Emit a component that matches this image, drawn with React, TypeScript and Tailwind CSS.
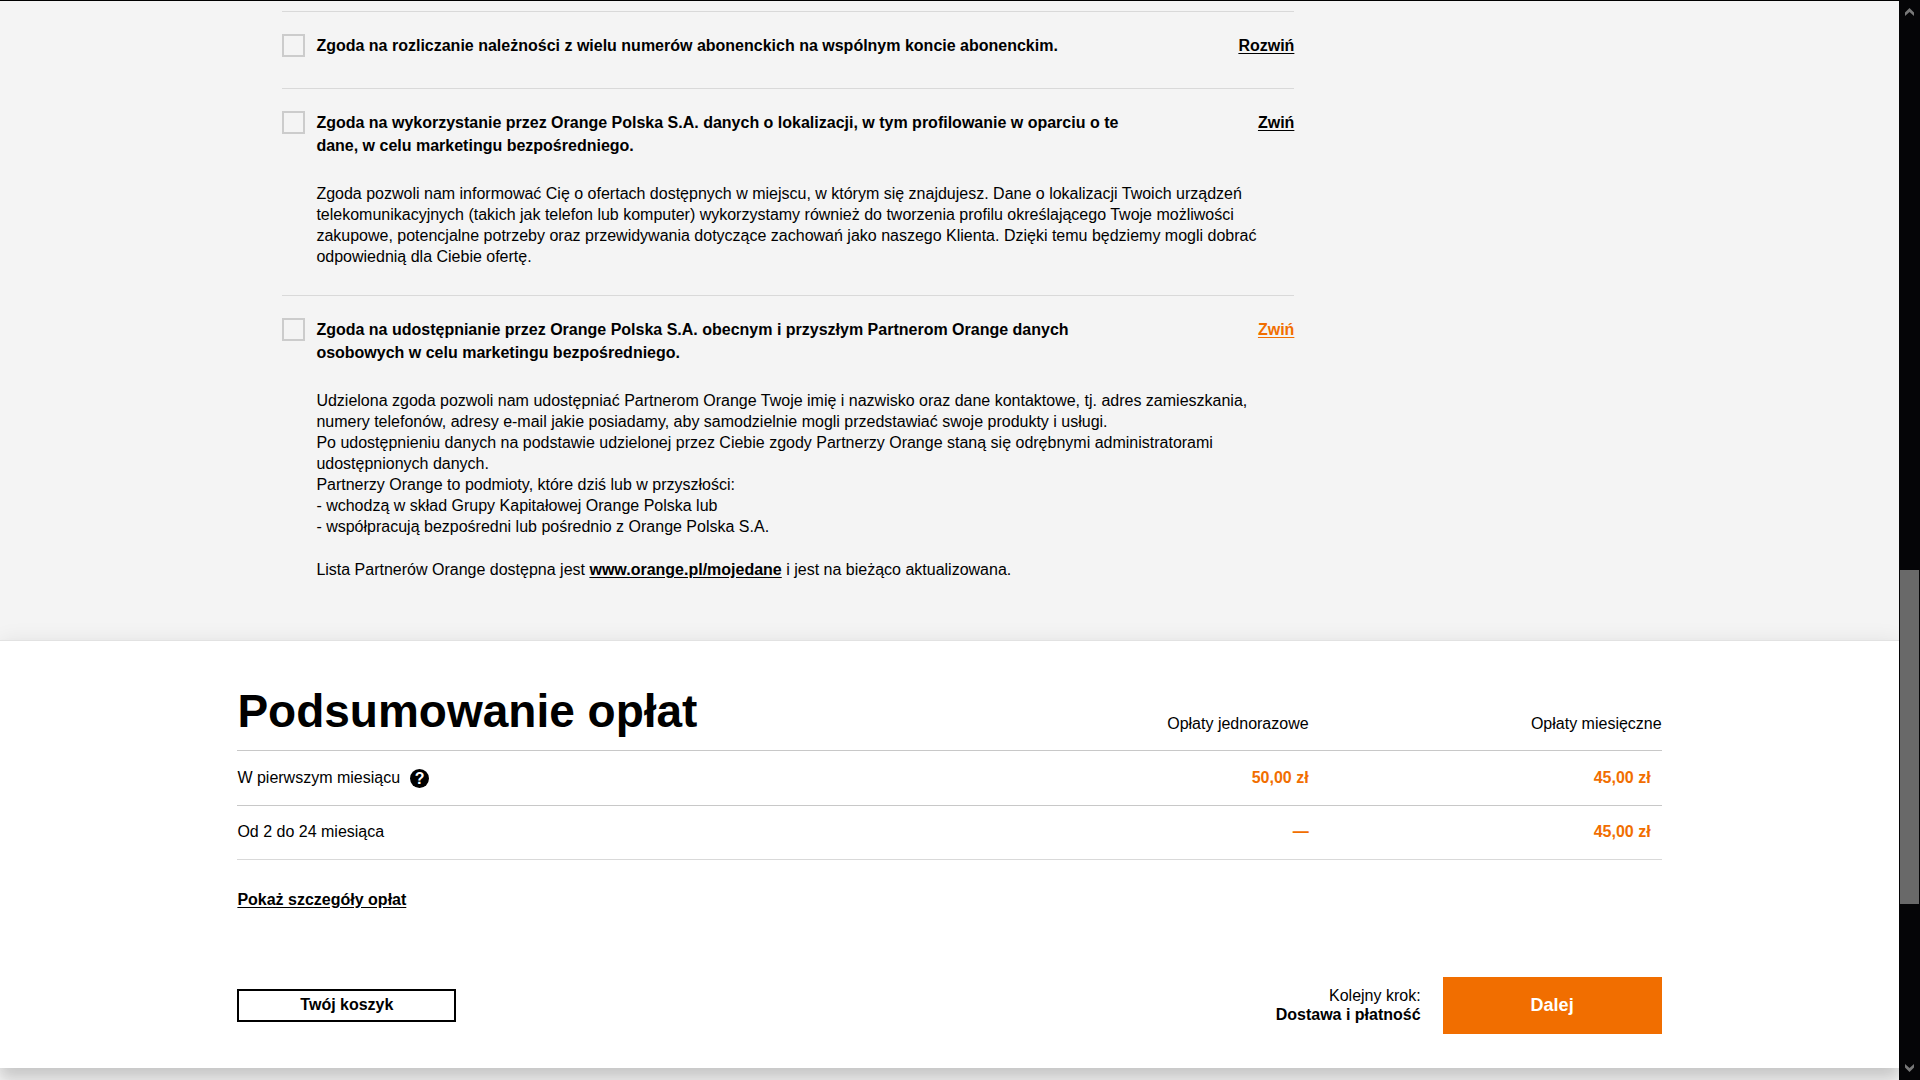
import { useState, type ReactNode } from 'react';

type ConsentProps = {
  id: string;
  title: string;
  defaultOpen?: boolean;
  toggleClassName?: string;
  children?: ReactNode;
};

function Consent({ id, title, defaultOpen = false, toggleClassName = 'text-black', children }: ConsentProps) {
  const [open, setOpen] = useState(defaultOpen);

  return (
    <section className="border-t border-[#d9d9d9] pt-[22px]">
      <div className="flex items-start">
        <input
          id={id}
          type="checkbox"
          className="size-[23px] shrink-0 appearance-none border-2 border-[#cccccc] checked:bg-[#f16e00]"
        />
        <label htmlFor={id} className="ml-[11px] max-w-[820px] font-bold leading-[23px]">
          {title}
        </label>
        <button
          type="button"
          aria-expanded={open}
          onClick={() => setOpen(!open)}
          className={`ml-auto cursor-pointer font-bold leading-[23px] underline underline-offset-2 ${toggleClassName}`}
        >
          {open ? 'Zwiń' : 'Rozwiń'}
        </button>
      </div>
      {open && children ? <div className="mt-[26px] ml-[34px] leading-[21px]">{children}</div> : null}
    </section>
  );
}

function Consents() {
  return (
    <div className="mx-auto w-3/4 max-w-[1425px]">
      <div className="mt-[10px] ml-[45px] flex max-w-[1012px] flex-col">
        <div className="pb-[31px]">
          <Consent
            id="joint-account"
            title="Zgoda na rozliczanie należności z wielu numerów abonenckich na wspólnym koncie abonenckim."
          />
        </div>
        <div className="pb-[28px]">
          <Consent
            id="location"
            title="Zgoda na wykorzystanie przez Orange Polska S.A. danych o lokalizacji, w tym profilowanie w oparciu o te dane, w celu marketingu bezpośredniego."
            defaultOpen
          >
            <p className="max-w-[950px]">
              Zgoda pozwoli nam informować Cię o ofertach dostępnych w miejscu, w którym się znajdujesz. Dane o
              lokalizacji Twoich urządzeń telekomunikacyjnych (takich jak telefon lub komputer) wykorzystamy również do
              tworzenia profilu określającego Twoje możliwości zakupowe, potencjalne potrzeby oraz przewidywania
              dotyczące zachowań jako naszego Klienta. Dzięki temu będziemy mogli dobrać odpowiednią dla Ciebie ofertę.
            </p>
          </Consent>
        </div>
        <div className="pb-[60px]">
          <Consent
            id="partners"
            title="Zgoda na udostępnianie przez Orange Polska S.A. obecnym i przyszłym Partnerom Orange danych osobowych w celu marketingu bezpośredniego."
            toggleClassName="text-[#f16e00]"
            defaultOpen
          >
            <p>
              Udzielona zgoda pozwoli nam udostępniać Partnerom Orange Twoje imię i nazwisko oraz dane kontaktowe, tj.
              adres zamieszkania, numery telefonów, adresy e-mail jakie posiadamy, aby samodzielnie mogli przedstawiać
              swoje produkty i usługi.
            </p>
            <p>
              Po udostępnieniu danych na podstawie udzielonej przez Ciebie zgody Partnerzy Orange staną się odrębnymi
              administratorami udostępnionych danych.
            </p>
            <p>Partnerzy Orange to podmioty, które dziś lub w przyszłości:</p>
            <p>- wchodzą w skład Grupy Kapitałowej Orange Polska lub</p>
            <p>- współpracują bezpośredni lub pośrednio z Orange Polska S.A.</p>
            <p className="mt-[22px]">
              Lista Partnerów Orange dostępna jest{' '}
              <a href="https://www.orange.pl/mojedane" className="font-bold underline underline-offset-2">
                www.orange.pl/mojedane
              </a>{' '}
              i jest na bieżąco aktualizowana.
            </p>
          </Consent>
        </div>
      </div>
    </div>
  );
}

function HelpButton() {
  return (
    <button
      type="button"
      aria-label="Pomoc"
      className="ml-[10px] inline-flex size-[19px] items-center justify-center rounded-full bg-black align-middle text-base font-bold leading-[19px] text-white"
    >
      ?
    </button>
  );
}

function Summary() {
  return (
    <section className="relative border-t border-[#e2e2e2] bg-white shadow-[0_0_20px_rgba(0,0,0,0.07),0_12px_14px_rgba(0,0,0,0.15)]">
      <div className="mx-auto w-3/4 max-w-[1425px]">
        <table className="w-full table-fixed border-collapse">
          <thead>
            <tr className="h-[109px] border-b border-[#c8c8c8]">
              <th scope="col" className="pb-[14px] text-left align-bottom">
                <h2 className="text-[46px] font-bold leading-[50px]">Podsumowanie opłat</h2>
              </th>
              <th scope="col" className="w-1/4 pb-[14px] text-right align-bottom font-normal">
                Opłaty jednorazowe
              </th>
              <th scope="col" className="w-[353px] pb-[14px] text-right align-bottom font-normal">
                Opłaty miesięczne
              </th>
            </tr>
          </thead>
          <tbody>
            <tr className="h-[55px] border-b border-[#c8c8c8]">
              <td>
                W pierwszym miesiącu
                <HelpButton />
              </td>
              <td className="text-right font-bold text-[#f16e00]">50,00 zł</td>
              <td className="pr-[11px] text-right font-bold text-[#f16e00]">45,00 zł</td>
            </tr>
            <tr className="h-[54px] border-b border-[#d9d9d9]">
              <td>Od 2 do 24 miesiąca</td>
              <td className="text-right font-bold text-[#f16e00]">—</td>
              <td className="pr-[11px] text-right font-bold text-[#f16e00]">45,00 zł</td>
            </tr>
          </tbody>
        </table>

        <a href="#szczegoly" className="mt-[28px] inline-block font-bold leading-6 underline underline-offset-2">
          Pokaż szczegóły opłat
        </a>

        <div className="mt-[65px] flex items-center justify-between pb-[34px]">
          <button type="button" className="h-[33px] w-[219px] border-2 border-black font-bold">
            Twój koszyk
          </button>
          <div className="flex items-center gap-[22px]">
            <p className="text-right leading-[19px]">
              Kolejny krok:
              <br />
              <strong>Dostawa i płatność</strong>
            </p>
            <button type="button" className="h-[57px] w-[219px] bg-[#f16e00] text-lg font-bold text-white">
              Dalej
            </button>
          </div>
        </div>
      </div>
    </section>
  );
}

function Scrollbar() {
  return (
    <div aria-hidden="true" className="sticky top-0 z-10 flex h-screen w-[21px] shrink-0 flex-col items-center bg-[#050507] py-2">
      <svg width="9" height="8" viewBox="0 0 9 8" fill="#787878">
        <path d="M4.500 0 9 4.500V8L4.500 4 0 8V4.500Z" />
      </svg>
      <div className="grow-[554] basis-0" />
      <div className="w-[19px] grow-[334] basis-0 bg-[#696969]" />
      <div className="grow-[160] basis-0" />
      <svg width="9" height="8" viewBox="0 0 9 8" fill="#787878">
        <path d="M4.500 8 0 3.500V0L4.500 4 9 0V3.500Z" />
      </svg>
    </div>
  );
}

function App() {
  return (
    <div className="flex min-h-screen bg-[#f4f4f4] font-['Liberation_Sans',Arial,sans-serif] text-base text-black">
      <main className="min-w-0 flex-1 overflow-hidden border-t border-black">
        <Consents />
        <Summary />
      </main>
      <Scrollbar />
    </div>
  );
}

export default App;
